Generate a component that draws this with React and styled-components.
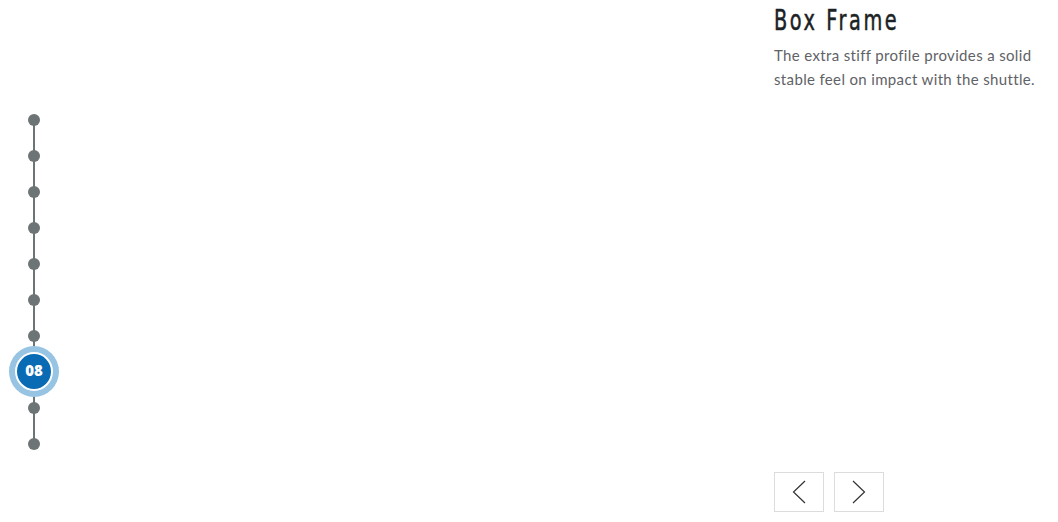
import React from "react";
import styled, { createGlobalStyle } from "styled-components";

const GlobalStyle = createGlobalStyle`
  html, body {
    margin: 0;
    padding: 0;
    background: #fff;
  }
  body {
    font-family: "Lato", "Liberation Sans", sans-serif;
  }
`;

const steps = ["01", "02", "03", "04", "05", "06", "07", "08", "09", "10"];
const active = 7;

function App() {
  return (
    <Page>
      <GlobalStyle />
      <Timeline>
        {steps.map((s, i) => (
          <Step key={s}>
            {i === active ? <ActiveDot>{s}</ActiveDot> : <Dot />}
          </Step>
        ))}
      </Timeline>
      <Info>
        <Title>Box Frame</Title>
        <Description>
          The extra stiff profile provides a solid stable feel on impact with
          the shuttle.
        </Description>
        <Controls>
          <NavButton aria-label="Previous">
            <svg width="14" height="24" viewBox="0 0 14 24" fill="none">
              <path d="M13 1L1.5 12L13 23" stroke="#333" strokeWidth="1.2" />
            </svg>
          </NavButton>
          <NavButton aria-label="Next">
            <svg width="14" height="24" viewBox="0 0 14 24" fill="none">
              <path d="M1 1L12.5 12L1 23" stroke="#333" strokeWidth="1.2" />
            </svg>
          </NavButton>
        </Controls>
      </Info>
    </Page>
  );
}

export default App;

const Page = styled.div`
  width: 1058px;
  height: 522px;
  display: flex;
  justify-content: space-between;
  box-sizing: border-box;
`;

const Timeline = styled.ul`
  list-style: none;
  margin: 0;
  padding: 102px 0 0 16px;
  position: relative;
  align-self: flex-start;

  &:before {
    content: "";
    position: absolute;
    left: 33px;
    top: 120px;
    height: 324px;
    width: 2px;
    background: #6d7475;
  }
`;

const Step = styled.li`
  position: relative;
  width: 36px;
  height: 36px;
  display: flex;
  align-items: center;
  justify-content: center;
`;

const Dot = styled.span`
  width: 12px;
  height: 12px;
  border-radius: 50%;
  background: #6d7475;
`;

const ActiveDot = styled.span`
  flex: none;
  width: 34px;
  height: 34px;
  border-radius: 50%;
  background: #0a6bb5;
  border: 2px solid #fff;
  box-shadow: 0 0 0 6px #98c4e4;
  color: #fff;
  font-family: "Open Sans", "Liberation Sans", sans-serif;
  font-weight: 800;
  font-size: 15px;
  line-height: 1;
  padding-bottom: 1px;
  box-sizing: content-box;
  display: flex;
  align-items: center;
  justify-content: center;
  position: relative;
  top: -1px;
  z-index: 1;
`;

const Info = styled.section`
  width: 284px;
  display: flex;
  flex-direction: column;
  padding: 2px 0 10px;
  box-sizing: border-box;
`;

const Title = styled.h2`
  margin: 0;
  font-family: "DejaVu Sans Condensed", "DejaVu Sans", sans-serif;
  font-stretch: condensed;
  font-weight: 400;
  font-size: 29px;
  line-height: 36px;
  letter-spacing: 3.5px;
  color: #1c2224;
  -webkit-text-stroke: 0.5px #1c2224;
  transform: scaleX(0.74);
  transform-origin: left center;
`;

const Description = styled.p`
  margin: 5px 0 0;
  font-family: "Lato", "Liberation Sans", sans-serif;
  font-size: 15px;
  line-height: 24px;
  letter-spacing: 0.35px;
  color: #5f6266;
  width: 280px;
`;

const Controls = styled.div`
  margin-top: auto;
  display: flex;
  gap: 10px;
`;

const NavButton = styled.button`
  width: 50px;
  height: 40px;
  padding: 0;
  border: 1px solid #dcdcdc;
  background: #fff;
  display: flex;
  align-items: center;
  justify-content: center;
  cursor: pointer;
`;
